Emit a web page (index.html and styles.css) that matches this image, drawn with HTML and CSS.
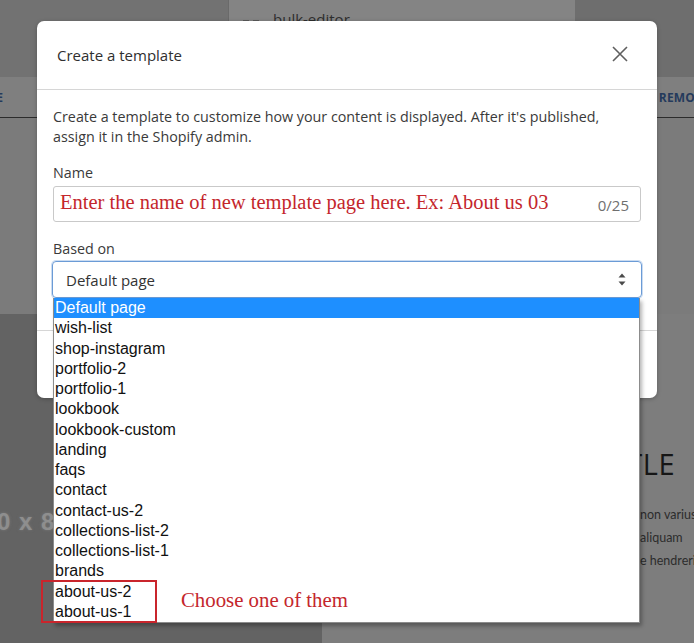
FILE: index.html
```html
<!DOCTYPE html>
<html>
<head>
<meta charset="utf-8">
<title>Create a template</title>
<link rel="stylesheet" href="styles.css">
</head>
<body>
<div class="app">
  <div class="topbar">
    <div class="top-left"></div>
    <div class="top-panel">
      <span class="handle"><i></i><i></i></span>
      <span class="bulk">bulk-editor</span>
    </div>
    <div class="top-right"></div>
  </div>
  <div class="tabs">
    <span class="tab tab-left">SAVE</span>
    <span class="tab tab-right">REMOVE</span>
  </div>
  <div class="section-mid"></div>
  <div class="section-low">
    <div class="placeholder"><span class="ph-text">0 x 800</span></div>
    <div class="textcol">
      <h2 class="tc-title">TITLE</h2>
      <p class="tc-line">non varius</p>
      <p class="tc-line">aliquam</p>
      <p class="tc-line">e hendrerit</p>
    </div>
  </div>
</div>

<div class="modal">
  <div class="modal-header">
    <span class="modal-title">Create a template</span>
    <svg class="close" width="16" height="16" viewBox="0 0 16 16"><path d="M1 1 L15 15 M15 1 L1 15" stroke="#5f5f5f" stroke-width="1.6" fill="none"/></svg>
  </div>
  <div class="modal-body">
    <p class="desc">Create a template to customize how your content is displayed. After it's published, assign it in the Shopify admin.</p>
    <div class="field">
      <div class="label">Name</div>
      <div class="input">
        <span class="input-text">Enter the name of new template page here. Ex: About us 03</span>
        <span class="counter">0/25</span>
      </div>
    </div>
    <div class="field field-2">
      <div class="label">Based on</div>
      <div class="select">
        <span>Default page</span>
        <svg class="arrows" width="8" height="13" viewBox="0 0 8 13"><path d="M4 0.5 L7.5 4.5 L0.5 4.5 Z M4 12.5 L7.5 8.5 L0.5 8.5 Z" fill="#4a4a4a"/></svg>
      </div>
    </div>
  </div>
  <div class="modal-footer"></div>
</div>

<ul class="dropdown">
  <li class="sel">Default page</li>
  <li>wish-list</li>
  <li>shop-instagram</li>
  <li>portfolio-2</li>
  <li>portfolio-1</li>
  <li>lookbook</li>
  <li>lookbook-custom</li>
  <li>landing</li>
  <li>faqs</li>
  <li>contact</li>
  <li>contact-us-2</li>
  <li>collections-list-2</li>
  <li>collections-list-1</li>
  <li>brands</li>
  <li>about-us-2</li>
  <li>about-us-1</li>
</ul>

<div class="annot-box"></div>
<div class="annot-text">Choose one of them</div>
</body>
</html>
```

FILE: styles.css
```css
* { box-sizing: border-box; }
html, body { margin: 0; padding: 0; }
body {
  width: 694px;
  height: 643px;
  overflow: hidden;
  position: relative;
  background: #7b7b7b;
  font-family: "Open Sans", "Noto Sans", sans-serif;
}

/* ---------- dimmed background app ---------- */
.app { display: flex; flex-direction: column; height: 643px; }
.topbar { display: flex; height: 77px; }
.top-left { width: 229px; background: #727272; border-right: 1px solid #6a6a6a; }
.top-panel {
  width: 346px;
  background: #848484;
  display: flex;
  align-items: flex-start;
  padding: 10px 0 0 14px;
  gap: 14px;
}
.handle { display: flex; gap: 4px; margin-top: 10px; }
.handle i { display: block; width: 6px; height: 2px; background: #5a5a5a; }
.bulk { font-size: 15px; color: #2e2e2e; line-height: 16px; margin-top: 1px; }
.top-right { flex: 1; background: #6e6e6e; }

.tabs {
  height: 41px;
  background: #7f7f7f;
  border-bottom: 1px solid #2c2c2c;
  display: flex;
  justify-content: space-between;
  align-items: center;
  overflow: hidden;
}
.tab { font-size: 12px; font-weight: 700; color: #243a5c; letter-spacing: 0.2px; }
.tab-left { margin-left: -27px; }
.tab-right { margin-right: -16px; }

.section-mid { height: 196px; background: #7b7b7b; }
.section-low { flex: 1; display: flex; }
.placeholder {
  width: 322px;
  background: #636363;
  padding-top: 194px;
}
.ph-text {
  display: block;
  margin-left: -3px;
  font-family: "Liberation Sans", sans-serif;
  font-size: 24px;
  font-weight: 700;
  color: #8e8e8e;
  letter-spacing: 1px;
  text-shadow: 0 0 3px #7a7a7a;
}
.textcol {
  flex: 1;
  background: #7d7d7d;
  padding: 130px 19px 0 0;
  white-space: nowrap;
  overflow: hidden;
}
.tc-title {
  margin: 0;
  text-align: right;
  font-family: "Open Sans", sans-serif;
  font-weight: 400;
  font-size: 29px;
  letter-spacing: 0.5px;
  color: #161616;
  line-height: 40px;
}
.tc-line {
  margin: 0 0 0 318px;
  font-family: "Lato", sans-serif;
  font-size: 12.5px;
  color: #2c2c2c;
  line-height: 23px;
}
.tc-line:first-of-type { margin-top: 19px; }

/* ---------- modal ---------- */
.modal {
  position: absolute;
  left: 37px;
  top: 21px;
  width: 620px;
  height: 377px;
  background: #fff;
  border-radius: 7px;
  box-shadow: 0 1px 4px rgba(0,0,0,0.25);
  display: flex;
  flex-direction: column;
}
.modal-header {
  height: 69px;
  border-bottom: 1px solid #d6d6d6;
  display: flex;
  align-items: center;
  justify-content: space-between;
  padding: 0 29px 0 20px;
}
.modal-title { font-size: 15px; color: #2f2f2f; }
.close { display: block; margin-top: -3px; }
.modal-body { padding: 17px 16px 0 16px; height: 240px; }
.desc {
  margin: 0;
  font-size: 14.3px;
  line-height: 20px;
  color: #3a3a3a;
}
.field { margin-top: 16px; }
.field-2 { margin-top: 17px; }
.label { font-size: 14.3px; line-height: 20px; color: #3a3a3a; margin-bottom: 3px; }
.field-2 .label { margin-bottom: 2px; }
.input {
  height: 36px;
  border: 1px solid #c9c9c9;
  border-radius: 3px;
  display: flex;
  align-items: center;
  justify-content: space-between;
  padding: 0 11px 0 6px;
}
.input-text {
  font-family: "Liberation Serif", serif;
  font-size: 20.5px;
  color: #c4262c;
  margin-top: -3px;
}
.counter { font-size: 15px; color: #6f6f6f; margin-top: 2px; }
.select {
  height: 37px;
  margin-left: -1px;
  margin-right: -1px;
  border: 1px solid #6b9bd6;
  border-radius: 4px;
  box-shadow: 0 0 0 1px rgba(107,155,214,0.35);
  display: flex;
  align-items: center;
  justify-content: space-between;
  padding: 0 15px 0 13px;
  font-size: 15px;
  color: #333;
}
.arrows { display: block; }
.modal-footer { flex: 1; border-top: 1px solid #d6d6d6; }

/* ---------- native select list ---------- */
.dropdown {
  position: absolute;
  left: 53px;
  top: 298px;
  width: 587px;
  margin: 0;
  padding: 0;
  list-style: none;
  background: #fff;
  border: 1px solid #8c8c8c;
  border-top: none;
  box-shadow: 2px 3px 4px rgba(0,0,0,0.3);
  font-family: "Liberation Sans", Arial, sans-serif;
  font-size: 16px;
  color: #111;
}
.dropdown li { height: 20.25px; line-height: 20px; padding-left: 1px; }
.dropdown li.sel { background: #1e8fff; color: #fff; }

/* ---------- annotations ---------- */
.annot-box {
  position: absolute;
  left: 41px;
  top: 580px;
  width: 116px;
  height: 43px;
  border: 2px solid #c9252c;
}
.annot-text {
  position: absolute;
  left: 181px;
  top: 588px;
  font-family: "Liberation Serif", serif;
  font-size: 20.8px;
  line-height: 24px;
  color: #c4262c;
}
```
